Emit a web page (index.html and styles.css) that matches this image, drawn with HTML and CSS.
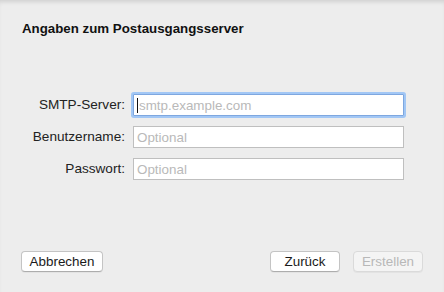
FILE: index.html
```html
<!DOCTYPE html>
<html lang="de">
<head>
    <meta charset="UTF-8">
    <meta name="viewport" content="width=device-width, initial-scale=1.0">
    <title>Angaben zum Postausgangsserver</title>
    <link rel="stylesheet" href="styles.css">
</head>
<body>
    <div class="sheet">
        <h1 class="title">Angaben zum Postausgangsserver</h1>

        <form class="fields">
            <label for="smtp">SMTP-Server:</label>
            <div class="field focused">
                <span class="caret"></span>
                <span class="placeholder">smtp.example.com</span>
            </div>

            <label for="user">Benutzername:</label>
            <div class="field">
                <span class="placeholder">Optional</span>
            </div>

            <label for="pass">Passwort:</label>
            <div class="field">
                <span class="placeholder">Optional</span>
            </div>
        </form>

        <div class="footer">
            <button class="btn cancel">Abbrechen</button>
            <div class="spacer"></div>
            <button class="btn">Zurück</button>
            <button class="btn disabled">Erstellen</button>
        </div>
    </div>
</body>
</html>
```

FILE: styles.css
```css
html, body {
    margin: 0;
    padding: 0;
}

body {
    font-family: "Liberation Sans", Arial, sans-serif;
    font-size: 13px;
    color: #1a1a1a;
    background-color: #ededed;
    width: 444px;
    height: 292px;
    overflow: hidden;
}

.sheet {
    height: 292px;
    box-sizing: border-box;
    padding: 21px 21px 20px 22px;
    display: flex;
    flex-direction: column;
    box-shadow: inset 0 4px 4px -2px rgba(0, 0, 0, 0.12);
}

.title {
    margin: 0;
    font-size: 13.3px;
    line-height: 16px;
    font-weight: bold;
    color: #111;
}

.fields {
    margin-top: 57px;
    display: grid;
    grid-template-columns: 103px 271px;
    column-gap: 8px;
    row-gap: 10px;
    align-items: center;
}

.fields label {
    text-align: right;
    font-size: 13.6px;
    line-height: 22px;
    color: #222;
}

.field {
    height: 22px;
    box-sizing: border-box;
    background: #fff;
    border: 1px solid #bfbfbf;
    display: flex;
    align-items: center;
    padding-left: 3px;
}

.field.focused {
    border-color: #7ea7df;
    box-shadow: 0 0 0 2px #a2c7f5;
    border-radius: 1px;
}

.caret {
    width: 1px;
    height: 15px;
    background: #111;
    margin-right: 1px;
}

.placeholder {
    color: #b9b9b9;
    font-size: 13.4px;
    white-space: nowrap;
}

.footer {
    margin-top: auto;
    display: flex;
    align-items: center;
    gap: 13px;
}

.spacer {
    flex: 1;
}

.btn {
    font-family: inherit;
    font-size: 13.4px;
    color: #1a1a1a;
    height: 21px;
    width: 70px;
    padding: 0;
    background: #fff;
    border: 1px solid #c4c4c4;
    border-bottom-color: #adadad;
    border-radius: 4px;
    box-shadow: 0 1px 0 rgba(0, 0, 0, 0.04);
}

.btn.cancel {
    width: 82px;
    margin-left: -1px;
}

.btn.disabled {
    color: #b8b8b8;
    background: #f4f4f4;
    border-color: #dadada;
}
```
